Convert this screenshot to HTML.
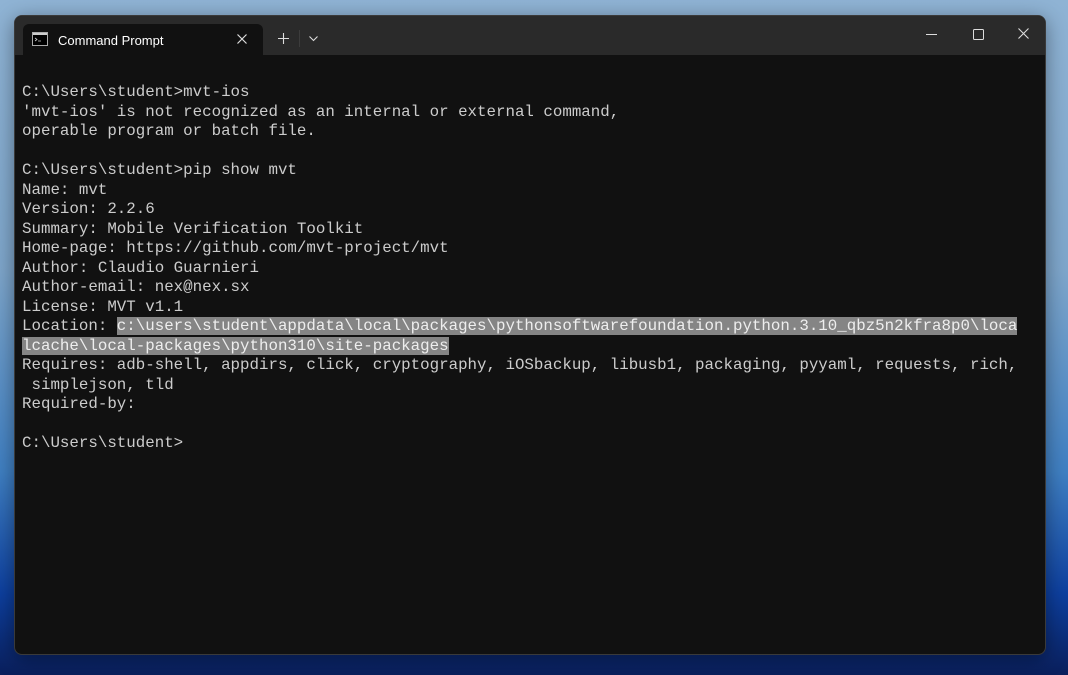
<!DOCTYPE html>
<html><head><style>
html,body{margin:0;padding:0;width:1068px;height:675px;overflow:hidden}
body{background:linear-gradient(180deg,#8fb3d4 0%,#7ea6cb 40%,#3f7fc2 70%,#0d3f9e 88%,#0a1f5c 100%);position:relative;font-family:"Liberation Sans",sans-serif}
.win{position:absolute;left:14px;top:15px;width:1032px;height:640px;background:#111;border-radius:8px;overflow:hidden;box-shadow:0 4px 20px rgba(0,0,0,.4);border:1px solid #3a3a3a;box-sizing:border-box}
.bar{position:absolute;left:0;top:0;right:0;height:39px;background:#2a2a2a}
.tab{position:absolute;left:8px;top:8px;width:240px;height:31px;background:#111;border-radius:6px 6px 0 0}
.tab .t{position:absolute;left:35px;top:9px;color:#fff;font-size:13px}
.term{position:absolute;left:7px;top:67px;font-family:"Liberation Mono",monospace;font-size:15.8px;line-height:19.5px;color:#cccccc;white-space:pre;letter-spacing:0}
.sel{background:#858585;color:#eee}
</style></head><body>
<div class="win">
<div class="bar">
 <div class="tab">
  <svg style="position:absolute;left:9px;top:8px" width="16" height="14"><rect x="0.5" y="0.5" width="15" height="13" fill="#000" stroke="#aaa"/><rect x="1" y="1" width="14" height="2" fill="#ccc"/><path d="M3 6l2 1.5L3 9M6 9h3" stroke="#ccc" stroke-width="0.8" fill="none"/></svg>
  <span class="t">Command Prompt</span>
  <svg style="position:absolute;left:214px;top:10px" width="10" height="10"><path d="M0.5 0.5L9.5 9.5M9.5 0.5L0.5 9.5" stroke="#ddd" stroke-width="1.2"/></svg>
 </div>
 <svg style="position:absolute;left:263px;top:17px" width="11" height="11"><path d="M5.5 0V11M0 5.5H11" stroke="#ddd" stroke-width="1.1"/></svg>
 <div style="position:absolute;left:284px;top:14px;width:1px;height:17px;background:#3c3c3c"></div>
 <svg style="position:absolute;left:294px;top:20px" width="9" height="6"><path d="M0.5 0.5L4.5 4.5L8.5 0.5" stroke="#ddd" stroke-width="1.1" fill="none"/></svg>
 <div style="position:absolute;left:911px;top:18px;width:11px;height:1px;background:#ddd"></div>
 <div style="position:absolute;left:958px;top:13px;width:9px;height:9px;border:1px solid #ddd;border-radius:1.5px"></div>
 <svg style="position:absolute;left:1003px;top:12px" width="11" height="11"><path d="M0.5 0.5L10.5 10.5M10.5 0.5L0.5 10.5" stroke="#ddd" stroke-width="1.1"/></svg>
</div>
<div class="term">C:\Users\student>mvt-ios
'mvt-ios' is not recognized as an internal or external command,
operable program or batch file.

C:\Users\student>pip show mvt
Name: mvt
Version: 2.2.6
Summary: Mobile Verification Toolkit
Home-page: https://github.com/mvt-project/mvt
Author: Claudio Guarnieri
Author-email: nex@nex.sx
License: MVT v1.1
Location: <span class="sel">c:\users\student\appdata\local\packages\pythonsoftwarefoundation.python.3.10_qbz5n2kfra8p0\loca</span>
<span class="sel">lcache\local-packages\python310\site-packages</span>
Requires: adb-shell, appdirs, click, cryptography, iOSbackup, libusb1, packaging, pyyaml, requests, rich,
 simplejson, tld
Required-by:

C:\Users\student></div>
</div>
</body></html>
